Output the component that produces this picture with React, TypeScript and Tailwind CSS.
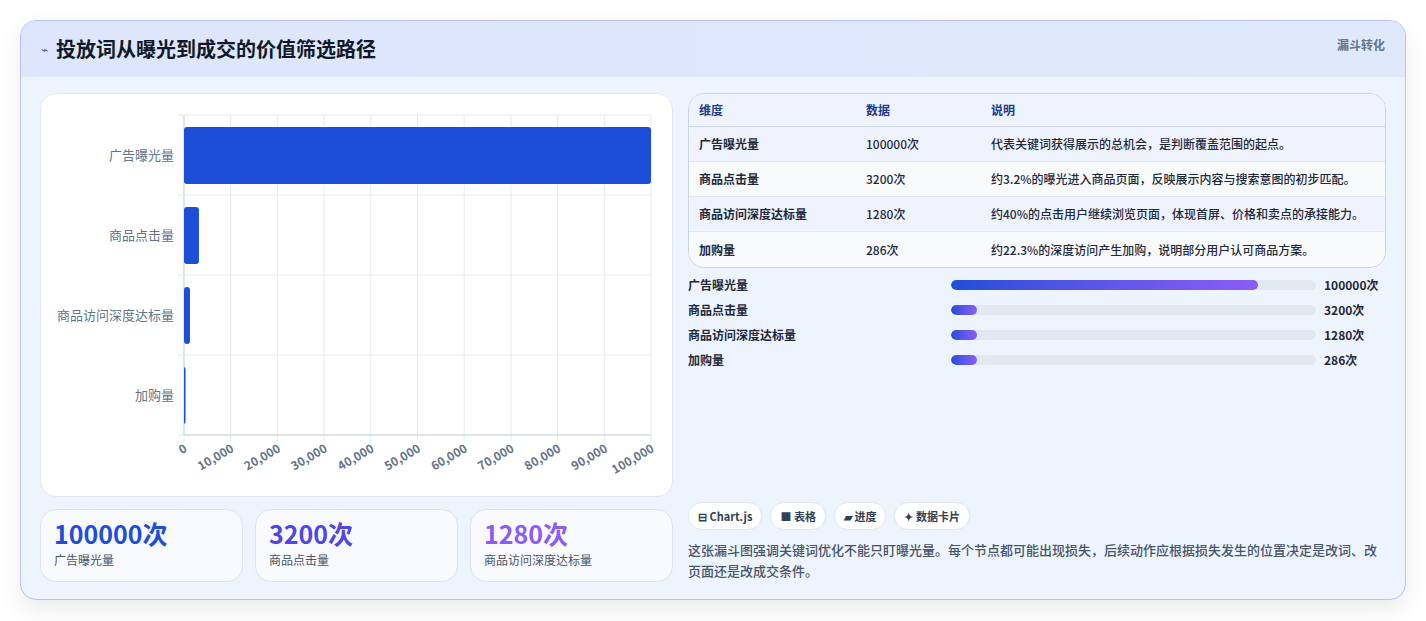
import React from "react";

const F = { fontFamily: '"Noto Sans CJK SC", "Noto Sans", sans-serif' };

const rows = [
  { k: "广告曝光量", v: 100000, d: "代表关键词获得展示的总机会，是判断覆盖范围的起点。" },
  { k: "商品点击量", v: 3200, d: "约3.2%的曝光进入商品页面，反映展示内容与搜索意图的初步匹配。" },
  { k: "商品访问深度达标量", v: 1280, d: "约40%的点击用户继续浏览页面，体现首屏、价格和卖点的承接能力。" },
  { k: "加购量", v: 286, d: "约22.3%的深度访问产生加购，说明部分用户认可商品方案。" },
];

function Chart() {
  const x0 = 143, x1 = 610, top = 21, h = 320;
  const ticks = Array.from({ length: 11 }, (_, i) => i * 10000);
  const sx = (v: number) => x0 + ((x1 - x0) * v) / 100000;
  return (
    <svg width="632" height="403" className="block">
      {ticks.map((t) => (
        <line key={t} x1={sx(t)} x2={sx(t)} y1={top} y2={top + h + 6} stroke="#e5ebf2" />
      ))}
      {[0, 1, 2, 3, 4].map((i) => (
        <line key={i} x1={x0 - 6} x2={x1} y1={top + i * 80} y2={top + i * 80} stroke="#e5ebf2" />
      ))}
      <line x1={x0} x2={x0} y1={top} y2={top + h} stroke="#cbd5e1" />
      <line x1={x0} x2={x1} y1={top + h} y2={top + h} stroke="#cbd5e1" />
      {rows.map((r, i) => (
        <g key={r.k}>
          <rect x={x0} y={top + i * 80 + 12} width={Math.max(1.5, sx(r.v) - x0)} height={57} rx={3} fill="#1d4ed8" />
          <text x={x0 - 10} y={top + i * 80 + 45} textAnchor="end" fontSize="13" fill="#64748b" style={F}>
            {r.k}
          </text>
        </g>
      ))}
      {ticks.map((t) => (
        <text
          key={t}
          x={sx(t) + 4}
          y={top + h + 16}
          fontSize="12"
          fontWeight="700"
          fill="#64748b"
          textAnchor="end"
          transform={`rotate(-30 ${sx(t) + 4} ${top + h + 16})`}
          style={F}
        >
          {t.toLocaleString("en-US")}
        </text>
      ))}
    </svg>
  );
}

export default function App() {
  const pct = [84, 7, 7, 7];
  return (
    <div className="w-[1426px] h-[621px] bg-white pt-5 px-5" style={F}>
      <div className="w-[1386px] h-[580px] rounded-2xl border border-[#b8c4f0] overflow-hidden bg-[#eef4fe] shadow-[0_10px_25px_rgba(0,0,0,0.08)] flex flex-col">
        <div className="h-[56px] shrink-0 bg-gradient-to-r from-[#dde6fd] to-[#dfe9fb] flex items-start justify-between px-5 pt-[13px]">
          <div className="flex items-center gap-[8px]">
            <span className="text-[12px] text-[#3b5bdb]">⌁</span>
            <span className="text-[20px] font-bold text-[#111827]">投放词从曝光到成交的价值筛选路径</span>
          </div>
          <span className="text-[12px] font-bold text-[#64748b] pt-[2px]">漏斗转化</span>
        </div>
        <div className="flex gap-[15px] px-[19px] pt-4">
          <div className="w-[633px] flex flex-col gap-3">
            <div className="h-[404px] bg-white rounded-2xl border border-[#e2e8f0]">
              <Chart />
            </div>
            <div className="flex gap-3">
              {[
                { v: "100000次", l: "广告曝光量", c: "text-[#1d4ed8]" },
                { v: "3200次", l: "商品点击量", c: "text-[#4f46e5]" },
                { v: "1280次", l: "商品访问深度达标量", c: "text-[#8b5cf6]" },
              ].map((s) => (
                <div key={s.l} className="flex-1 h-[73px] rounded-2xl border border-[#dbe4f3] bg-[#f8fafe] px-[13px] pt-[7px]">
                  <div className={`text-[25px] font-bold leading-[32px] ${s.c}`}>{s.v}</div>
                  <div className="text-[12px] text-[#475569] mt-[2px]">{s.l}</div>
                </div>
              ))}
            </div>
          </div>
          <div className="w-[700px] flex flex-col">
            <div className="rounded-2xl border border-[#cbd5e1] overflow-hidden text-[12px] text-[#1e293b]">
              <div className="flex h-[33px] items-center bg-[#eef3fe] font-bold text-[#1e3a8a] border-b border-[#cbd5e1]">
                <div className="w-[177px] pl-[10px]">维度</div>
                <div className="w-[125px]">数据</div>
                <div>说明</div>
              </div>
              {rows.map((r, i) => (
                <div
                  key={r.k}
                  className={`flex h-[35px] items-center font-medium ${i % 2 === 0 ? "bg-[#eef3fe]" : "bg-[#f8fafc]"} ${i < 3 ? "border-b border-[#e2e8f0]" : ""}`}
                >
                  <div className="w-[177px] pl-[10px] font-bold">{r.k}</div>
                  <div className="w-[125px]">{r.v}次</div>
                  <div>{r.d}</div>
                </div>
              ))}
            </div>
            <div className="flex flex-col gap-[9px] mt-[9px]">
              {rows.map((r, i) => (
                <div key={r.k} className="flex items-center h-[16px] text-[12px] font-bold text-[#1e293b]">
                  <div className="w-[263px]">{r.k}</div>
                  <div className="w-[365px] h-[10px] rounded-full bg-[#e2e8f0] overflow-hidden">
                    <div className="h-full rounded-full bg-gradient-to-r from-[#1d4ed8] to-[#8b5cf6]" style={{ width: `${pct[i]}%` }} />
                  </div>
                  <div className="ml-[8px]">{r.v}次</div>
                </div>
              ))}
            </div>
            <div className="flex gap-[8px] mt-[134px]">
              {["⊟ Chart.js", "■ 表格", "▰ 进度", "✦ 数据卡片"].map((c) => (
                <span key={c} className="h-[28px] px-[9px] flex items-center rounded-full border border-[#e2e8f0] bg-white text-[11px] font-bold text-[#334155]">
                  {c}
                </span>
              ))}
            </div>
            <p className="mt-[9px] text-[13px] leading-[21px] text-[#475569] font-medium">
              这张漏斗图强调关键词优化不能只盯曝光量。每个节点都可能出现损失，后续动作应根据损失发生的位置决定是改词、改页面还是改成交条件。
            </p>
          </div>
        </div>
      </div>
    </div>
  );
}
